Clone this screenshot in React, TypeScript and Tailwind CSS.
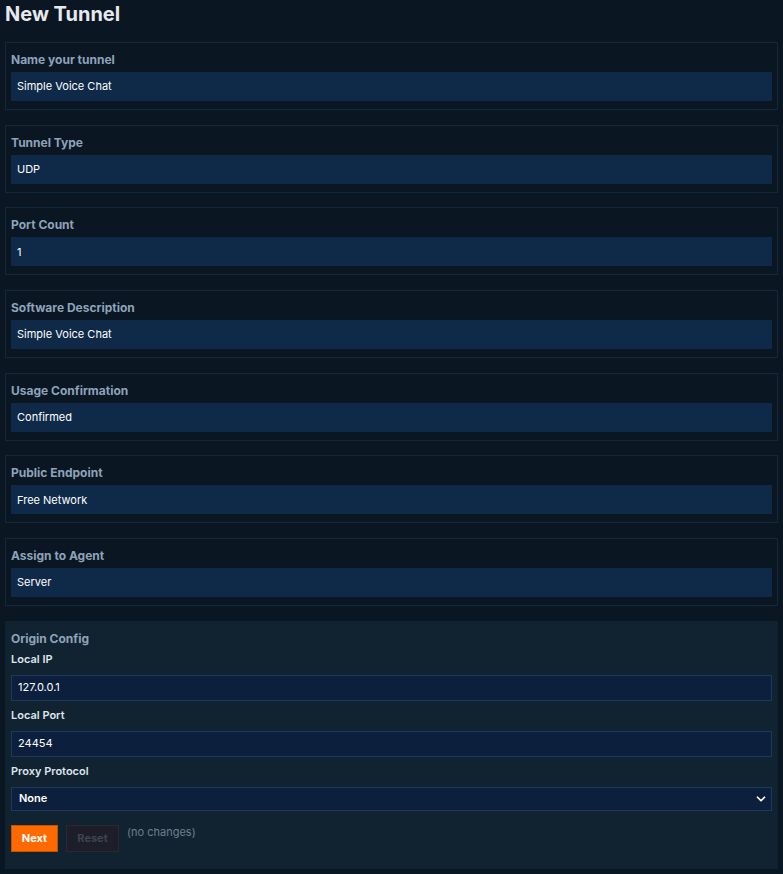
import { ChevronDown } from "lucide-react";

const fields = [
  { label: "Name your tunnel", value: "Simple Voice Chat" },
  { label: "Tunnel Type", value: "UDP" },
  { label: "Port Count", value: "1" },
  { label: "Software Description", value: "Simple Voice Chat" },
  { label: "Usage Confirmation", value: "Confirmed" },
  { label: "Public Endpoint", value: "Free Network" },
  { label: "Assign to Agent", value: "Server" },
];

export default function App() {
  return (
    <div className="min-h-[874px] bg-[#0a1622] px-[5px] pb-[5px] font-['Inter',sans-serif] text-white">
      <h1 className="pt-[1px] text-[20px] font-bold leading-[26px] text-[#e6e9ee]">New Tunnel</h1>

      <div className="mt-[15px] flex flex-col gap-[14.67px]">
        {fields.map((f) => (
          <div key={f.label} className="border border-[#14283a] px-[5px] pb-[8px] pt-[8px]">
            <div className="mb-[4px] text-[12px] font-bold leading-[17px] text-[#8ea3ba]">{f.label}</div>
            <div className="flex h-[29px] items-center bg-[#0f2a48] px-[6px] text-[11px] text-white">
              {f.value}
            </div>
          </div>
        ))}

        {/* Origin Config */}
        <div className="bg-[#112331] px-[6px] pb-[17px] pt-[9px]">
          <div className="text-[12px] font-bold leading-[17px] text-[#8ea3ba]">Origin Config</div>

          <div className="mt-[4px] text-[11px] font-semibold leading-[16px] text-[#dfe5ec]">Local IP</div>
          <div className="mt-[8px] flex h-[26px] items-center border border-[#1b3a5e] bg-[#0c1f3d] px-[6px] text-[11px]">
            127.0.0.1
          </div>

          <div className="mt-[6px] text-[11px] font-semibold leading-[16px] text-[#dfe5ec]">Local Port</div>
          <div className="mt-[8px] flex h-[26px] items-center border border-[#1b3a5e] bg-[#0c1f3d] px-[6px] text-[11px]">
            24454
          </div>

          <div className="mt-[6px] text-[11px] font-semibold leading-[16px] text-[#dfe5ec]">Proxy Protocol</div>
          <div className="mt-[8px] flex h-[24px] items-center justify-between border border-[#1b3a5e] bg-[#0c1f3d] pl-[7px] pr-[3px] text-[11px] font-semibold">
            <span>None</span>
            <ChevronDown size={14} strokeWidth={3} className="text-white" />
          </div>

          <div className="mt-[14px] flex items-start gap-[8px]">
            <button className="h-[27px] w-[47px] border border-[#c65200] bg-[#ff6a00] text-[11px] font-bold text-white">
              Next
            </button>
            <button className="h-[27px] w-[53px] border border-[#2a2833] bg-[#1d1e29] text-[11px] font-bold text-[#3e4450]">
              Reset
            </button>
            <span className="text-[11px] leading-[14px] text-[#6f7e8e]">(no changes)</span>
          </div>
        </div>
      </div>
    </div>
  );
}
